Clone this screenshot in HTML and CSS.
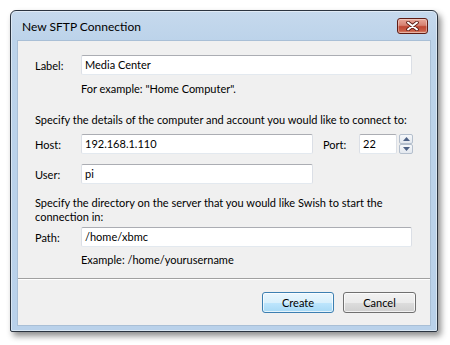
FILE: index.html
```html
<!DOCTYPE html>
<html>
<head>
<meta charset="utf-8">
<link rel="stylesheet" href="styles.css">
</head>
<body>
<div class="window">
  <div class="titlebar">
    <span class="title">New SFTP Connection</span>
    <span class="close"><svg width="13" height="10" viewBox="0 0 13 10"><path d="M2 1.5 L11 8.5 M11 1.5 L2 8.5" stroke="#5a1a12" stroke-width="3.6" stroke-linecap="round"/><path d="M2 1.5 L11 8.5 M11 1.5 L2 8.5" stroke="#fff" stroke-width="2" stroke-linecap="round"/></svg></span>
  </div>
  <div class="client">
    <div class="form">
      <div class="row r-label">
        <span class="lbl">Label:</span>
        <span class="input wide">Media Center</span>
      </div>
      <div class="hint h1">For example: "Home Computer".</div>
      <div class="text t1">Specify the details of the computer and account you would like to connect to:</div>
      <div class="row r-host">
        <span class="lbl">Host:</span>
        <span class="input mid">192.168.1.110</span>
        <span class="lbl port-lbl">Port:</span>
        <span class="input port">22</span>
        <span class="spin">
          <span class="sb"><svg width="7" height="4" viewBox="0 0 7 4"><path d="M0 4 L3.5 0 L7 4Z" fill="#4d6185"/></svg></span>
          <span class="sb"><svg width="7" height="4" viewBox="0 0 7 4"><path d="M0 0 L3.5 4 L7 0Z" fill="#4d6185"/></svg></span>
        </span>
      </div>
      <div class="row r-user">
        <span class="lbl">User:</span>
        <span class="input mid">pi</span>
      </div>
      <div class="text t2">Specify the directory on the server that you would like Swish to start the<br>connection in:</div>
      <div class="row r-path">
        <span class="lbl">Path:</span>
        <span class="input wide">/home/xbmc</span>
      </div>
      <div class="hint h2">Example: /home/yourusername</div>
    </div>
    <div class="footer">
      <span class="btn default">Create</span>
      <span class="btn">Cancel</span>
    </div>
  </div>
</div>
</body>
</html>
```

FILE: styles.css
```css
html, body {
  margin: 0;
  padding: 0;
  background: #fff;
}
body {
  width: 450px;
  height: 345px;
  overflow: hidden;
  font-family: Lato, "Liberation Sans", Arial, sans-serif;
  font-size: 11px;
  color: #000;
}
.window {
  margin: 10px 0 0 10px;
  width: 428px;
  height: 322px;
  box-sizing: border-box;
  border: 1px solid #2b3440;
  border-radius: 6px 6px 2px 2px;
  background: linear-gradient(180deg, #c6d9ed 0px, #bcd3ea 30px, #b9d1ea 100%);
  box-shadow: 3px 4px 6px rgba(0,0,0,0.45), inset 0 0 0 1px rgba(255,255,255,0.45);
  display: flex;
  flex-direction: column;
}
.titlebar {
  height: 29px;
  display: flex;
  align-items: center;
  padding: 0 9px 0 11px;
}
.title {
  font-size: 12px;
  color: #000;
  flex: 1;
  padding-top: 2px;
}
.close {
  width: 29px;
  height: 14px;
  border: 1px solid #5f1c14;
  border-radius: 3px;
  background: linear-gradient(180deg, #e9a99b 0%, #d68171 45%, #bf4733 55%, #c95e48 85%, #e29a82 100%);
  display: flex;
  align-items: center;
  justify-content: center;
  margin-top: 1px;
  box-shadow: inset 0 0 0 1px rgba(255,255,255,0.35);
}
.client {
  margin: 0 6px 5px 6px;
  flex: 1;
  background: #f0f0f0;
  border: 1px solid #a9bfd6;
  display: flex;
  flex-direction: column;
}
.form {
  padding: 14px 17px 0 17px;
  display: flex;
  flex-direction: column;
}
.row {
  display: flex;
  align-items: center;
  height: 20px;
}
.lbl {
  width: 46px;
  flex: none;
}
.input {
  height: 20px;
  box-sizing: border-box;
  background: #fff;
  border: 1px solid #e3e9ef;
  border-top-color: #abadb3;
  border-left-color: #dbdfe6;
  border-right-color: #dbdfe6;
  border-radius: 2px;
  padding: 0 3px;
  line-height: 18px;
  white-space: nowrap;
}
.wide { width: 331px; }
.mid { width: 232px; }
.port-lbl { margin-left: 10px; width: 36px; }
.port { width: 38px; }
.spin {
  margin-left: 2px;
  display: flex;
  flex-direction: column;
}
.sb {
  width: 14px;
  height: 10px;
  box-sizing: border-box;
  border: 1px solid #b4bfcd;
  border-radius: 2px;
  background: linear-gradient(180deg, #f6f8fb, #e3e8ef);
  display: flex;
  align-items: center;
  justify-content: center;
}
.hint {
  margin-left: 46px;
  line-height: 14px;
}
.text { line-height: 14px; white-space: nowrap; }
.h1 { margin-top: 7px; }
.t1 { margin-top: 17px; }
.r-host { margin-top: 7px; }
.r-user { margin-top: 10px; }
.t2 { margin-top: 12px; }
.r-path { margin-top: 3px; }
.h2 { margin-top: 6px; }
.footer {
  margin-top: 11px;
  border-top: 1px solid #a0a0a0;
  box-shadow: inset 0 1px 0 #fff;
  flex: 1;
  display: flex;
  justify-content: flex-end;
  align-items: flex-start;
  padding: 13px 14px 0 0;
  gap: 9px;
}
.btn {
  width: 73px;
  height: 21px;
  box-sizing: border-box;
  border: 1px solid #707070;
  border-radius: 3px;
  background: linear-gradient(180deg, #f2f2f2 0%, #ebebeb 50%, #dddddd 51%, #cfcfcf 100%);
  box-shadow: inset 0 0 0 1px rgba(255,255,255,0.7);
  display: flex;
  align-items: center;
  justify-content: center;
}
.btn.default {
  width: 72px;
  border-color: #3c7fb1;
  background: linear-gradient(180deg, #eaf6fd 0%, #d9f0fc 50%, #bee6fd 51%, #a7d9f5 100%);
}
```
